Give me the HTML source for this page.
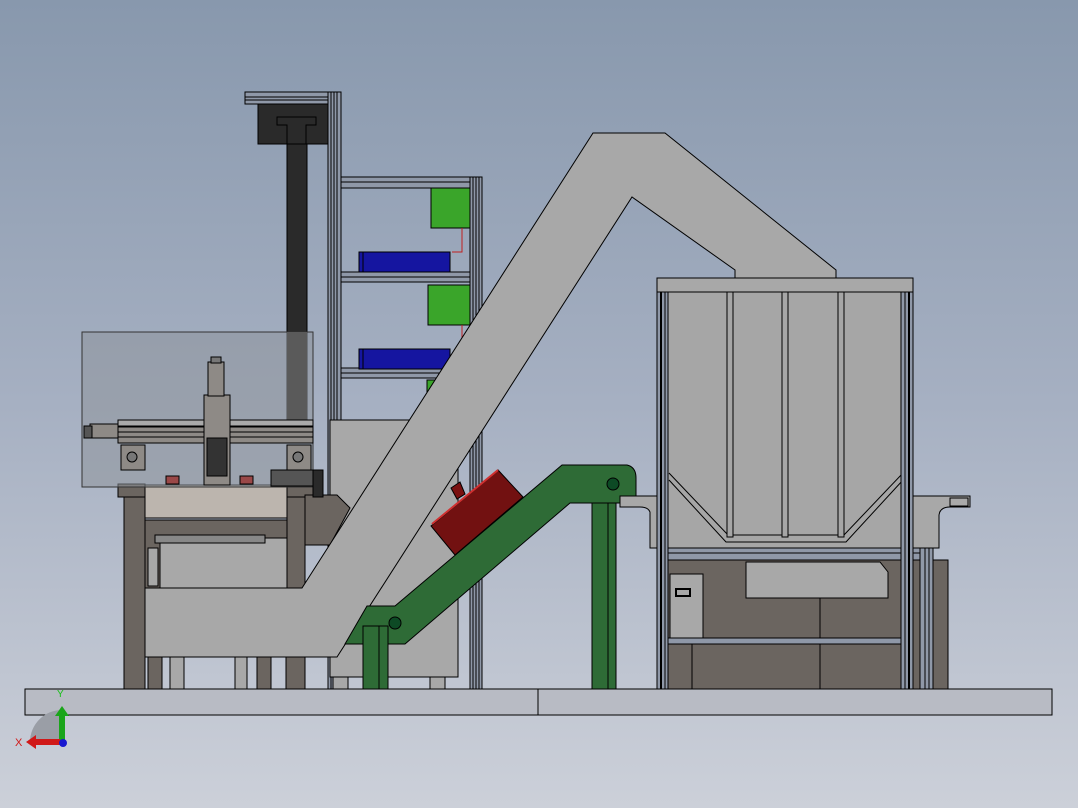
<!DOCTYPE html>
<html><head><meta charset="utf-8"><style>
html,body{margin:0;padding:0;width:1078px;height:808px;overflow:hidden}
svg{display:block}
text{font-family:"Liberation Sans",sans-serif}
</style></head><body>
<svg width="1078" height="808" viewBox="0 0 1078 808" xmlns="http://www.w3.org/2000/svg">
<defs>
<linearGradient id="bg" x1="0" y1="0" x2="0" y2="1">
<stop offset="0" stop-color="#8898ad"/><stop offset="0.5" stop-color="#a6b0c2"/><stop offset="1" stop-color="#ccd0d9"/>
</linearGradient>
</defs>
<rect width="1078" height="808" fill="url(#bg)"/>
<g stroke="#000" stroke-width="1">
<!-- base plates -->
<rect x="25" y="689" width="513" height="26" fill="#b8bbc4"/>
<rect x="538" y="689" width="514" height="26" fill="#b8bbc4"/>

<!-- dark column -->
<rect x="245" y="92" width="88" height="12" fill="#8f98a8"/>
<line x1="245" y1="97" x2="333" y2="97"/><line x1="245" y1="100" x2="333" y2="100"/>
<rect x="258" y="104" width="70" height="40" fill="#2a2a2a"/>
<path d="M277 117 H316 V125 H306 V144 H287 V125 H277 Z" fill="#2a2a2a"/>
<rect x="287" y="144" width="20" height="290" fill="#2a2a2a"/>

<!-- left frame verticals -->
<rect x="328" y="92" width="13" height="597" fill="#8f98a8"/>
<line x1="331" y1="92" x2="331" y2="689"/><line x1="334" y1="92" x2="334" y2="689"/><line x1="337" y1="92" x2="337" y2="689"/>
<rect x="470" y="177" width="12" height="512" fill="#8f98a8"/>
<line x1="473" y1="177" x2="473" y2="689"/><line x1="476" y1="177" x2="476" y2="689"/><line x1="479" y1="177" x2="479" y2="689"/>
<!-- shelves -->
<rect x="341" y="177" width="129" height="11" fill="#8f98a8"/><line x1="341" y1="182" x2="470" y2="182"/>
<rect x="341" y="272" width="129" height="10" fill="#8f98a8"/><line x1="341" y1="277" x2="470" y2="277"/>
<rect x="341" y="368" width="129" height="10" fill="#8f98a8"/><line x1="341" y1="373" x2="470" y2="373"/>
<!-- green boxes -->
<rect x="431" y="188" width="39" height="40" fill="#3aa52a"/>
<rect x="428" y="285" width="42" height="40" fill="#3aa52a"/>
<rect x="427" y="380" width="43" height="40" fill="#3aa52a"/>
<path d="M462 228 V252 H452" fill="none" stroke="#c02020"/>
<path d="M462 325 V345" fill="none" stroke="#c02020"/>
<!-- blue -->
<rect x="359" y="252" width="91" height="20" fill="#1515a0"/>
<rect x="359" y="349" width="91" height="20" fill="#1515a0"/>
<line x1="363" y1="252" x2="363" y2="272"/><line x1="363" y1="349" x2="363" y2="369"/>

<!-- gray box behind -->
<rect x="330" y="420" width="128" height="257" fill="#a8a8a8"/>
<rect x="333" y="677" width="15" height="12" fill="#a8a8a8"/>
<rect x="430" y="677" width="15" height="12" fill="#a8a8a8"/>

<!-- table -->
<rect x="124" y="497" width="21" height="192" fill="#6b6560"/>
<rect x="287" y="497" width="18" height="192" fill="#6b6560"/>
<rect x="118" y="484" width="27" height="13" fill="#6b6560"/>
<rect x="287" y="484" width="26" height="13" fill="#6b6560"/>
<rect x="145" y="485" width="142" height="33" fill="#bcb5ae"/>
<rect x="145" y="520" width="142" height="68" fill="#6b6560"/>
<rect x="160" y="538" width="127" height="50" fill="#a8a8a8"/>
<rect x="155" y="535" width="110" height="8" fill="#888"/>
<rect x="148" y="548" width="10" height="38" fill="#a8a8a8"/>
<path d="M305 495 H337 L350 508 L330 545 H305 Z" fill="#6b6560"/>
<rect x="148" y="657" width="14" height="32" fill="#6b6560"/>
<rect x="170" y="657" width="14" height="32" fill="#a8a8a8"/>
<rect x="235" y="657" width="12" height="32" fill="#a8a8a8"/>
<rect x="257" y="657" width="14" height="32" fill="#6b6560"/>
<rect x="286" y="657" width="19" height="32" fill="#6b6560"/>

<!-- big inclined conveyor -->
<path d="M145 588 L302 588 L593 133 L665 133 L836 270 L836 278 L735 278 L735 270 L632 197 L337 657 L145 657 Z" fill="#a8a8a8"/>

<!-- glass enclosure -->
<rect x="82" y="332" width="231" height="155" fill="#8e939b" fill-opacity="0.55" stroke="#333"/>
<rect x="287" y="332" width="20" height="100" fill="#5a5a5a" stroke="none"/>
<!-- gantry -->
<rect x="118" y="420" width="195" height="6" fill="#aaa"/>
<rect x="118" y="427" width="195" height="16" fill="#8e8a86"/>
<line x1="118" y1="432" x2="313" y2="432"/><line x1="118" y1="437" x2="313" y2="437"/>
<rect x="90" y="424" width="28" height="14" fill="#8e8a86"/>
<rect x="84" y="426" width="8" height="12" fill="#555"/>
<rect x="204" y="395" width="26" height="90" fill="#8e8a86"/>
<rect x="208" y="362" width="16" height="34" fill="#8e8a86"/>
<rect x="211" y="357" width="10" height="6" fill="#777"/>
<rect x="207" y="438" width="20" height="38" fill="#333"/>
<rect x="121" y="445" width="24" height="25" fill="#8e8a86"/>
<rect x="287" y="445" width="24" height="25" fill="#8e8a86"/>
<circle cx="132" cy="457" r="5" fill="#777"/><circle cx="298" cy="457" r="5" fill="#777"/>
<rect x="166" y="476" width="13" height="8" fill="#9a4848"/>
<rect x="240" y="476" width="13" height="8" fill="#9a4848"/>
<rect x="271" y="470" width="42" height="16" fill="#555"/>
<rect x="313" y="470" width="10" height="27" fill="#2a2a2a"/>

<!-- green conveyor -->
<rect x="592" y="484" width="24" height="205" fill="#2e6b36"/>
<line x1="608" y1="484" x2="608" y2="689"/>
<path d="M345 644 L367 606 L395 606 L562 465 L627 465 Q636 467 636 478 L636 503 L570 503 L405 644 Z" fill="#2e6b36"/>
<rect x="363" y="626" width="25" height="63" fill="#2e6b36"/>
<line x1="379" y1="626" x2="379" y2="689"/>
<circle cx="395" cy="623" r="6" fill="#0d4a25"/>
<circle cx="613" cy="484" r="6" fill="#0d4a25"/>
<!-- red box -->
<path d="M451 488 L460 482 L465 494 L457 499 Z" fill="#7a1010"/>
<path d="M431 526 L498 470 L523 497 L455 555 Z" fill="#721111"/>
<line x1="432" y1="524" x2="498" y2="470" stroke="#d03030" stroke-width="2"/>

<!-- hopper lower cabinet -->
<rect x="668" y="558" width="237" height="131" fill="#6b6560"/>
<line x1="820" y1="595" x2="820" y2="689"/><line x1="692" y1="595" x2="692" y2="689"/>
<rect x="670" y="574" width="33" height="64" fill="#a8a8a8"/>
<rect x="676" y="589" width="14" height="7" fill="none" stroke-width="2"/>
<path d="M746 562 H880 L888 572 V598 H746 Z" fill="#a8a8a8"/>
<rect x="668" y="638" width="237" height="6" fill="#8f98a8"/>
<rect x="913" y="560" width="35" height="129" fill="#6b6560"/>
<!-- side brackets -->
<path d="M620 496 H668 V548 H650 V512 Q648 507 640 507 H620 Z" fill="#a8a8a8"/>
<path d="M913 496 H970 V507 H950 Q940 507 939 515 V548 H913 Z" fill="#a8a8a8"/>
<rect x="950" y="498" width="18" height="8" fill="#aaa"/>
<!-- hopper body -->
<rect x="668" y="292" width="237" height="256" fill="#a6a6a6"/>
<path d="M669 473 L728 535 H844 L903 473" fill="none"/>
<path d="M669 480 L726 542 H846 L903 480" fill="none"/>
<rect x="727" y="292" width="6" height="245" fill="#a6a6a6"/>
<rect x="782" y="292" width="6" height="245" fill="#a6a6a6"/>
<rect x="838" y="292" width="6" height="245" fill="#a6a6a6"/>
<rect x="657" y="278" width="256" height="14" fill="#a8a8a8"/>
<!-- cross bar -->
<rect x="657" y="548" width="263" height="12" fill="#8f98a8"/>
<line x1="657" y1="553" x2="920" y2="553"/>
<!-- posts -->
<rect x="657" y="292" width="11" height="397" fill="#8f98a8"/>
<line x1="661" y1="292" x2="661" y2="689" stroke-width="2"/><line x1="665" y1="292" x2="665" y2="689"/>
<rect x="901" y="292" width="12" height="397" fill="#8f98a8"/>
<line x1="905" y1="292" x2="905" y2="689"/><line x1="909" y1="292" x2="909" y2="689" stroke-width="2"/>
<rect x="920" y="548" width="13" height="141" fill="#8f98a8"/>
<line x1="925" y1="548" x2="925" y2="689"/><line x1="929" y1="548" x2="929" y2="689"/>
</g>

<!-- axis triad -->
<path d="M30 742 A32 32 0 0 1 62 710 L62 742 Z" fill="#9a9ea6"/>
<rect x="59" y="714" width="6" height="28" fill="#1aa51a"/>
<path d="M55 716 L62 706 L69 716 Z" fill="#1aa51a"/>
<rect x="34" y="739" width="26" height="6" fill="#d01818"/>
<path d="M36 735 L26 742 L36 749 Z" fill="#d01818"/>
<circle cx="63" cy="743" r="4" fill="#1818d0"/>
<text x="57" y="697" font-size="10" fill="#18c018">Y</text>
<text x="15" y="746" font-size="11" fill="#d01818">X</text>
</svg>
</body></html>
